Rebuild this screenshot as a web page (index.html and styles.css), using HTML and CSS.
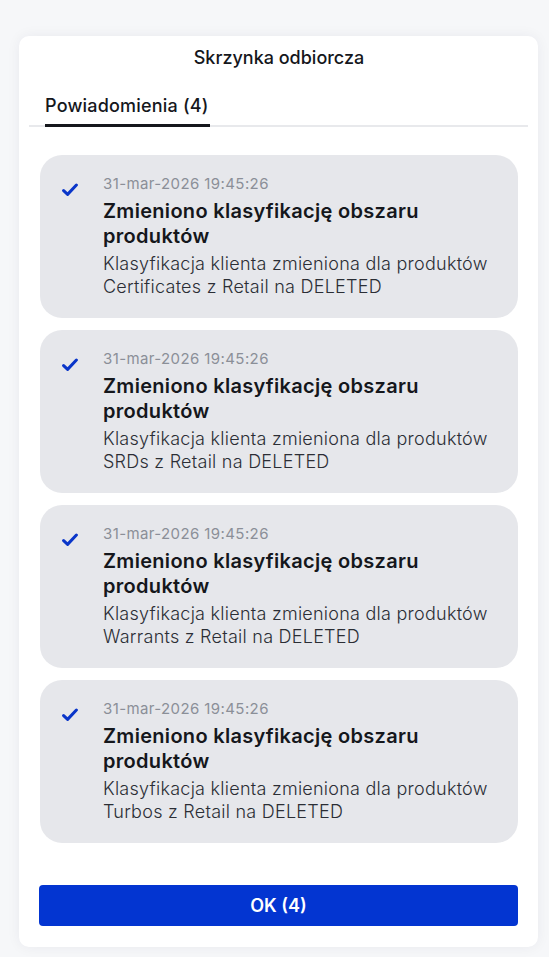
FILE: index.html
```html
<!DOCTYPE html>
<html lang="pl">
<head>
<meta charset="utf-8">
<link rel="stylesheet" href="styles.css">
</head>
<body>
<div class="dialog">
  <h1 class="title">Skrzynka odbiorcza</h1>
  <div class="tabs">
    <div class="tab active">Powiadomienia (4)</div>
  </div>
  <ul class="list">
    <li class="item">
      <svg class="check" viewBox="0 0 16 14" width="16" height="14"><path d="M1.6 7.6 L5.6 11.4 L14.4 2" fill="none" stroke="#0a36c9" stroke-width="3" stroke-linecap="round" stroke-linejoin="round"/></svg>
      <div class="content">
        <div class="date">31-mar-2026 19:45:26</div>
        <div class="head">Zmieniono klasyfikację obszaru produktów</div>
        <div class="body">Klasyfikacja klienta zmieniona dla produktów Certificates z Retail na DELETED</div>
      </div>
    </li>
    <li class="item">
      <svg class="check" viewBox="0 0 16 14" width="16" height="14"><path d="M1.6 7.6 L5.6 11.4 L14.4 2" fill="none" stroke="#0a36c9" stroke-width="3" stroke-linecap="round" stroke-linejoin="round"/></svg>
      <div class="content">
        <div class="date">31-mar-2026 19:45:26</div>
        <div class="head">Zmieniono klasyfikację obszaru produktów</div>
        <div class="body">Klasyfikacja klienta zmieniona dla produktów SRDs z Retail na DELETED</div>
      </div>
    </li>
    <li class="item">
      <svg class="check" viewBox="0 0 16 14" width="16" height="14"><path d="M1.6 7.6 L5.6 11.4 L14.4 2" fill="none" stroke="#0a36c9" stroke-width="3" stroke-linecap="round" stroke-linejoin="round"/></svg>
      <div class="content">
        <div class="date">31-mar-2026 19:45:26</div>
        <div class="head">Zmieniono klasyfikację obszaru produktów</div>
        <div class="body">Klasyfikacja klienta zmieniona dla produktów Warrants z Retail na DELETED</div>
      </div>
    </li>
    <li class="item">
      <svg class="check" viewBox="0 0 16 14" width="16" height="14"><path d="M1.6 7.6 L5.6 11.4 L14.4 2" fill="none" stroke="#0a36c9" stroke-width="3" stroke-linecap="round" stroke-linejoin="round"/></svg>
      <div class="content">
        <div class="date">31-mar-2026 19:45:26</div>
        <div class="head">Zmieniono klasyfikację obszaru produktów</div>
        <div class="body">Klasyfikacja klienta zmieniona dla produktów Turbos z Retail na DELETED</div>
      </div>
    </li>
  </ul>
  <button class="ok">OK (4)</button>
</div>
</body>
</html>
```
FILE: styles.css
```css
* { box-sizing: border-box; }
html, body { margin: 0; padding: 0; }
body {
  background: #f6f7f9;
  font-family: Inter, "Noto Sans", sans-serif;
  color: #15171c;
  padding: 36px 11px 10px 19px;
}
.dialog {
  width: 519px;
  background: #ffffff;
  border-radius: 10px;
  box-shadow: 0 0 14px rgba(30, 40, 70, 0.06);
  padding: 11px 20px 21px 21px;
}
.title {
  margin: 0;
  text-align: center;
  font-size: 18px;
  font-weight: 500;
  line-height: 22px;
  color: #15171c;
}
.tabs {
  margin: 25px -10px 0 -11px;
  padding: 0 10px 0 16px;
  border-bottom: 2px solid #e8e9ec;
  display: flex;
}
.tab {
  font-size: 18px;
  font-weight: 500;
  line-height: 24px;
  letter-spacing: 0.2px;
  padding: 0 1px 6px 0;
  margin-bottom: -2px;
}
.tab.active { border-bottom: 3px solid #15171c; }
.list {
  list-style: none;
  margin: 28px 0 0 0;
  padding: 0;
  display: flex;
  flex-direction: column;
  gap: 12px;
}
.item {
  background: #e6e7eb;
  border-radius: 22px;
  height: 163px;
  display: flex;
  align-items: flex-start;
  padding: 19px 14px 0 22px;
}
.check {
  flex: none;
  margin-top: 9px;
  margin-right: 25px;
}
.content { flex: 1; }
.date {
  font-size: 15px;
  line-height: 20px;
  letter-spacing: 0.4px;
  color: #8b8f98;
}
.head {
  margin-top: 5px;
  font-size: 20px;
  font-weight: 600;
  line-height: 25px;
  letter-spacing: 0.3px;
  color: #15171c;
}
.body {
  margin-top: 3px;
  font-size: 18px;
  font-weight: 300;
  line-height: 23px;
  letter-spacing: 0.25px;
  color: #2b2e35;
}
.ok {
  display: block;
  width: 479px;
  height: 41px;
  margin: 42px 0 0 -1px;
  border: none;
  border-radius: 4px;
  background: #0335d1;
  color: #ffffff;
  font-family: Inter, "Noto Sans", sans-serif;
  font-size: 18px;
  font-weight: 600;
}
```
